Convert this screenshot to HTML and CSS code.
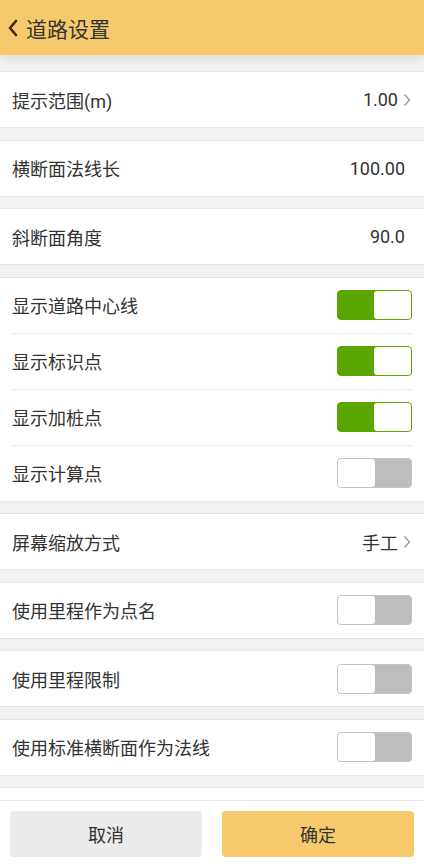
FILE: index.html
```html
<!DOCTYPE html>
<html lang="zh-CN">
<head>
    <meta charset="UTF-8">
    <meta name="viewport" content="width=device-width, initial-scale=1.0">
    <title>道路设置</title>
    <link rel="stylesheet" href="styles.css">
</head>
<body>
    <div class="page">
        <header class="topbar">
            <svg class="back" width="12" height="18" viewBox="0 0 12 18">
                <path d="M9 2 L3 9 L9 16" fill="none" stroke="#4a2608" stroke-width="2.6" stroke-linecap="round" stroke-linejoin="round"/>
            </svg>
            <span class="title">道路设置</span>
        </header>

        <main class="list">
            <section class="group">
                <div class="row">
                    <span class="label">提示范围(m)</span>
                    <span class="value">1.00</span>
                    <svg class="chev" width="8" height="14" viewBox="0 0 8 14"><path d="M1.5 1.5 L6.5 7 L1.5 12.5" fill="none" stroke="#9a9a9a" stroke-width="1.4"/></svg>
                </div>
            </section>
            <section class="group">
                <div class="row">
                    <span class="label">横断面法线长</span>
                    <span class="value plain">100.00</span>
                </div>
            </section>
            <section class="group">
                <div class="row">
                    <span class="label">斜断面角度</span>
                    <span class="value plain">90.0</span>
                </div>
            </section>
            <section class="group">
                <div class="row">
                    <span class="label">显示道路中心线</span>
                    <span class="switch on"><span class="knob"></span></span>
                </div>
                <div class="row">
                    <span class="label">显示标识点</span>
                    <span class="switch on"><span class="knob"></span></span>
                </div>
                <div class="row">
                    <span class="label">显示加桩点</span>
                    <span class="switch on"><span class="knob"></span></span>
                </div>
                <div class="row">
                    <span class="label">显示计算点</span>
                    <span class="switch"><span class="knob"></span></span>
                </div>
            </section>
            <section class="group">
                <div class="row">
                    <span class="label">屏幕缩放方式</span>
                    <span class="value">手工</span>
                    <svg class="chev" width="8" height="14" viewBox="0 0 8 14"><path d="M1.5 1.5 L6.5 7 L1.5 12.5" fill="none" stroke="#9a9a9a" stroke-width="1.4"/></svg>
                </div>
            </section>
            <section class="group">
                <div class="row">
                    <span class="label">使用里程作为点名</span>
                    <span class="switch"><span class="knob"></span></span>
                </div>
            </section>
            <section class="group">
                <div class="row">
                    <span class="label">使用里程限制</span>
                    <span class="switch"><span class="knob"></span></span>
                </div>
            </section>
            <section class="group">
                <div class="row">
                    <span class="label">使用标准横断面作为法线</span>
                    <span class="switch"><span class="knob"></span></span>
                </div>
            </section>
            <section class="group">
                <div class="row">
                    <span class="label">&nbsp;</span>
                </div>
            </section>
        </main>

        <footer class="actions">
            <button class="btn cancel">取消</button>
            <button class="btn confirm">确定</button>
        </footer>
    </div>
</body>
</html>
```

FILE: styles.css
```css
body {
    margin: 0;
    font-family: Roboto, "Noto Sans CJK SC", sans-serif;
    background-color: #f2f2f2;
    color: #333;
}
.page {
    height: 100vh;
    display: flex;
    flex-direction: column;
    overflow: hidden;
}
.topbar {
    flex: none;
    height: 55px;
    background: #f6c96c;
    display: flex;
    align-items: center;
    padding-left: 7px;
    box-shadow: 0 2px 10px rgba(0,0,0,0.12);
    position: relative;
    z-index: 1;
}
.back {
    margin-right: 7px;
}
.title {
    font-size: 21px;
    color: #333;
}
.list {
    flex: 1;
    overflow: hidden;
    padding-top: 16px;
}
.group {
    background: white;
    border-top: 1px solid #e4e4e4;
    border-bottom: 1px solid #e4e4e4;
    margin-bottom: 11.5px;
    padding: 0 12px;
}
.row {
    height: 55px;
    display: flex;
    align-items: center;
}
.row + .row {
    border-top: 1px solid #ececec;
}
.label {
    flex: 1;
    font-size: 18px;
    color: #333;
}
.value {
    font-size: 18px;
    color: #333;
    margin-right: 5px;
}
.value.plain {
    margin-right: 7px;
}
.chev {
    margin-right: 1px;
}
.switch {
    width: 75px;
    height: 30px;
    box-sizing: border-box;
    border-radius: 4px;
    background: #bdbdbd;
    border: 1.5px solid #c4c4c4;
    display: flex;
    justify-content: flex-start;
}
.switch .knob {
    width: 37px;
    height: 100%;
    background: white;
    border-radius: 3px;
}
.switch.on {
    background: #5aa500;
    border-color: #5aa500;
    justify-content: flex-end;
}
.actions {
    flex: none;
    background: white;
    border-top: 1px solid #e4e4e4;
    display: flex;
    gap: 20px;
    padding: 10px 10px 9px;
    position: relative;
    z-index: 1;
}
.btn {
    flex: 1;
    height: 46px;
    border: none;
    border-radius: 4px;
    font-family: inherit;
    font-size: 18px;
    color: #333;
}
.cancel {
    background: #ebebeb;
}
.confirm {
    background: #f6c96c;
}
```
